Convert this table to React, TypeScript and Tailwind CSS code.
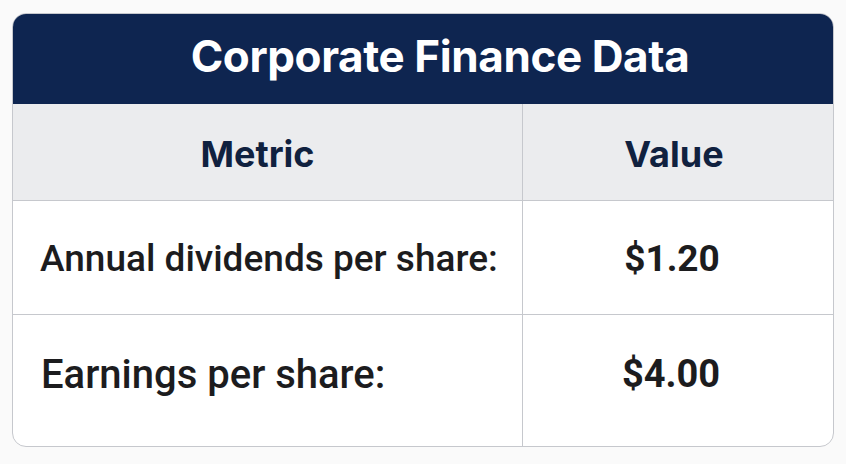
export default function App() {
  return (
    <div className="w-[846px] h-[464px] bg-[#fafafa] pt-[13px] pl-[12px] pr-[12px] font-['Inter',sans-serif]">
      <div className="w-[822px] h-[434px] rounded-[14px] border border-[#c6c8cd] bg-white overflow-hidden flex flex-col">
        {/* title */}
        <div className="h-[90px] shrink-0 bg-[#0e2550] flex items-center justify-center pb-[6px] pl-[34px]">
          <h1 className="text-[44px] font-bold text-white tracking-[-0.4px]">Corporate Finance Data</h1>
        </div>

        {/* header row */}
        <div className="h-[97px] shrink-0 grid grid-cols-[510px_1fr] bg-[#ebecee] border-b border-[#c6c8cd]">
          <div className="flex items-center justify-center border-r border-[#c6c8cd] pt-[4px] pr-[20px]">
            <span className="text-[36px] font-bold text-[#10213f]">Metric</span>
          </div>
          <div className="flex items-center justify-center pt-[4px] pr-[8px]">
            <span className="text-[36px] font-bold text-[#10213f]">Value</span>
          </div>
        </div>

        {/* data rows */}
        <div className="h-[114px] shrink-0 grid grid-cols-[510px_1fr] border-b border-[#c6c8cd] font-['Roboto',sans-serif]">
          <div className="flex items-center border-r border-[#c6c8cd] pl-[27px] pt-[2px]">
            <span className="text-[37px] font-medium text-[#1c1c1e]">Annual dividends per share:</span>
          </div>
          <div className="flex items-center justify-center pt-[2px] pr-[12px]">
            <span className="text-[37px] font-bold text-[#1c1c1e]">$1.20</span>
          </div>
        </div>
        <div className="flex-1 grid grid-cols-[510px_1fr] font-['Roboto',sans-serif]">
          <div className="flex items-center border-r border-[#c6c8cd] pl-[28px] pb-[12px]">
            <span className="text-[40px] font-medium text-[#1c1c1e]">Earnings per share:</span>
          </div>
          <div className="flex items-center justify-center pb-[12px] pr-[14px]">
            <span className="text-[38px] font-bold text-[#1c1c1e]">$4.00</span>
          </div>
        </div>
      </div>
    </div>
  );
}
